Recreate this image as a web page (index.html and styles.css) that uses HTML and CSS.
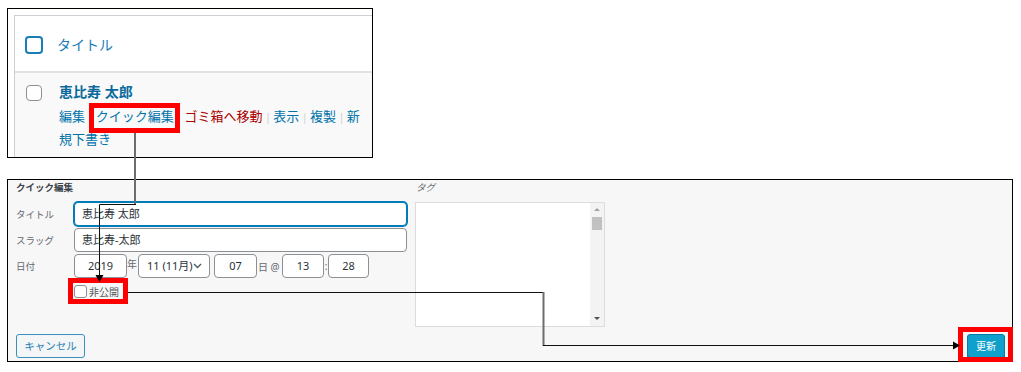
FILE: index.html
```html
<!DOCTYPE html>
<html lang="ja">

<head>
    <meta charset="UTF-8">
    <meta name="viewport" content="width=device-width, initial-scale=1.0">
    <title>クイック編集</title>
    <link rel="stylesheet" href="styles.css">
</head>

<body>
    <div class="page">
        <!-- 投稿一覧のスクリーンショット -->
        <div class="shot shot-list">
            <div class="list-table">
                <div class="list-head">
                    <span class="cb cb-head"></span>
                    <span class="col-title">タイトル</span>
                </div>
                <div class="list-row">
                    <span class="cb cb-row"></span>
                    <div class="row-body">
                        <div class="row-title">恵比寿 太郎</div>
                        <div class="row-actions"><a>編集</a> <span class="sep">|</span> <a>クイック編集</a> <span class="sep">|</span> <a class="trash">ゴミ箱へ移動</a> <span class="sep">|</span> <a>表示</a> <span class="sep">|</span> <a>複製</a> <span class="sep">|</span> <a>新規下書き</a></div>
                    </div>
                </div>
            </div>
        </div>

        <!-- クイック編集のスクリーンショット -->
        <div class="shot shot-edit">
            <div class="edit-fields">
                <div class="edit-col">
                    <div class="edit-legend">クイック編集</div>
                    <div class="field-row">
                        <span class="field-label">タイトル</span>
                        <span class="text-input is-focus">恵比寿 太郎</span>
                    </div>
                    <div class="field-row">
                        <span class="field-label">スラッグ</span>
                        <span class="text-input">恵比寿-太郎</span>
                    </div>
                    <div class="field-row">
                        <span class="field-label">日付</span>
                        <span class="text-input num num-year">2019</span>
                        <span class="unit unit-year">年</span>
                        <span class="text-input select"><span>11 (11月)</span>
                            <svg class="chevron" width="9" height="6" viewBox="0 0 9 6"><path d="M1 1l3.5 3.5L8 1" fill="none" stroke="#50575e" stroke-width="1.4"/></svg>
                        </span>
                        <span class="text-input num num-day">07</span>
                        <span class="unit unit-day">日&nbsp;@</span>
                        <span class="text-input num num-hour">13</span>
                        <span class="unit unit-colon">:</span>
                        <span class="text-input num num-min">28</span>
                    </div>
                    <div class="private">
                        <span class="cb cb-small"></span>
                        <span class="private-text">非公開</span>
                    </div>
                </div>
                <div class="tags-col">
                    <div class="tags-title">タグ</div>
                    <div class="tag-box">
                        <div class="scrollbar">
                            <span class="sb-up"></span>
                            <span class="sb-thumb"></span>
                            <span class="sb-down"></span>
                        </div>
                    </div>
                </div>
            </div>
            <div class="edit-buttons">
                <button class="btn btn-cancel">キャンセル</button>
                <button class="btn btn-primary">更新</button>
            </div>
        </div>
    </div>

    <!-- 注釈（赤枠と矢印） -->
    <svg class="notes" width="1021" height="372" viewBox="0 0 1021 372">
        <g fill="none">
            <path d="M135 133V205" stroke="#6d6d6d" stroke-width="2"/>
            <path d="M136 204.5H99.5V276" stroke="#111" stroke-width="1"/>
            <path d="M128 292.5H543.5" stroke="#111" stroke-width="1"/>
            <path d="M543.5 292V346" stroke="#6d6d6d" stroke-width="2"/>
            <path d="M543 345.5H954" stroke="#111" stroke-width="1"/>
            <rect x="91.5" y="105.5" width="86" height="25" stroke="#f00" stroke-width="5"/>
            <rect x="70.5" y="280.5" width="55" height="21" stroke="#f00" stroke-width="5"/>
            <rect x="960.5" y="329.5" width="50" height="30" stroke="#f00" stroke-width="5"/>
        </g>
        <polygon points="95.5,275 103.5,275 99.5,282" fill="#000"/>
        <polygon points="953,341.5 953,349.5 960,345.5" fill="#000"/>
    </svg>
</body>

</html>
```

FILE: styles.css
```css
/* 全体 */
body {
    margin: 0;
    width: 1021px;
    height: 372px;
    background: #fff;
    position: relative;
    overflow: hidden;
    font-family: 'Noto Sans', 'Noto Sans CJK JP', sans-serif;
    color: #3c434a;
}

.page {
    display: flex;
    flex-direction: column;
    align-items: flex-start;
    gap: 21px;
    padding: 8px 0 0 7px;
}

.shot {
    box-sizing: border-box;
    border: 1px solid #000;
    overflow: hidden;
}

/* チェックボックス共通 */
.cb {
    display: inline-block;
    box-sizing: border-box;
    background: #fff;
    flex: none;
}

/* 投稿一覧 */
.shot-list {
    width: 366px;
    height: 150px;
    background: #fff;
    padding: 6px 0 0 6px;
}

.list-table {
    width: 380px;
    border: 1px solid #ccd0d4;
    border-bottom: 0;
    background: #fff;
}

.list-head {
    box-sizing: border-box;
    height: 57px;
    display: flex;
    align-items: flex-start;
    padding: 20px 0 0 10px;
    border-bottom: 2px solid #e1e2e4;
}

.cb-head {
    width: 18px;
    height: 18px;
    border: 2px solid #1a7db8;
    border-radius: 4px;
}

.col-title {
    margin-left: 14px;
    font-size: 14px;
    line-height: 18px;
    color: #1a7db8;
}

.list-row {
    display: flex;
    align-items: flex-start;
    height: 100px;
    padding: 9px 0 0 11px;
    background: #f9f9f9;
}

.cb-row {
    width: 16px;
    height: 16px;
    margin-top: 3px;
    border: 1px solid #8c8f94;
    border-radius: 4px;
}

.row-body {
    margin-left: 17px;
    width: 303px;
}

.row-title {
    font-size: 14px;
    font-weight: bold;
    line-height: 20px;
    color: #0a6a9c;
    margin-bottom: 3px;
}

/* 区切りの空白を細くするため、親は小さい文字サイズ */
.row-actions {
    font-size: 10px;
    line-height: 22px;
    color: #0073aa;
}

.row-actions a {
    font-size: 13px;
}

.row-actions .trash {
    color: #a00;
}

.row-actions .sep {
    color: #ccc;
}

/* クイック編集 */
.shot-edit {
    width: 1006px;
    height: 183px;
    background: #f7f7f7;
    display: flex;
    flex-direction: column;
    padding: 1px 7px 3px 8px;
}

.edit-fields {
    display: flex;
    gap: 8px;
}

.edit-col {
    width: 391px;
}

.edit-legend {
    font-size: 9.5px;
    font-weight: bold;
    line-height: 14px;
    color: #3c434a;
    margin-bottom: 7px;
}

.field-row {
    display: flex;
    align-items: center;
    height: 24px;
    margin-bottom: 2px;
}

.field-label {
    width: 58px;
    flex: none;
    font-size: 9.5px;
    color: #646970;
}

.text-input {
    box-sizing: border-box;
    width: 333px;
    height: 24px;
    padding: 0 7px;
    border: 1px solid #8c8f94;
    border-radius: 4px;
    background: #fff;
    font-size: 11px;
    line-height: 22px;
    color: #2c3338;
    white-space: nowrap;
}

.text-input.is-focus {
    border-color: #007cba;
    box-shadow: 0 0 0 1px #007cba;
}

.num {
    padding: 0;
    text-align: center;
}

.num-year { width: 53px; }
.num-day { width: 43px; margin-left: 4px; }
.num-hour { width: 42px; }
.num-min { width: 41px; }

.select {
    width: 72px;
    display: flex;
    align-items: center;
    justify-content: space-between;
    padding: 0 7px 0 8px;
}

.chevron {
    flex: none;
}

.unit {
    font-size: 10px;
    color: #646970;
    flex: none;
}

.unit-year {
    width: 11px;
    margin-bottom: 6px;
}

.unit-day {
    width: 25px;
    padding-left: 1px;
    box-sizing: border-box;
}

.unit-colon {
    width: 4px;
    text-align: center;
}

.private {
    display: flex;
    align-items: center;
    height: 14px;
    margin: 6px 0 0 58px;
}

.cb-small {
    width: 13px;
    height: 13px;
    border: 1px solid #8c8f94;
    border-radius: 3px;
}

.private-text {
    margin-left: 2px;
    font-size: 10px;
    color: #50575e;
}

/* タグ */
.tags-col {
    width: 190px;
}

.tags-title {
    padding-left: 1px;
    font-size: 9.5px;
    font-style: italic;
    line-height: 14px;
    color: #646970;
    margin-bottom: 7px;
}

.tag-box {
    box-sizing: border-box;
    height: 125px;
    border: 1px solid #dcdcde;
    background: #fff;
    display: flex;
    justify-content: flex-end;
}

.scrollbar {
    width: 14px;
    background: #f3f3f3;
    display: flex;
    flex-direction: column;
    align-items: center;
}

.sb-up {
    margin-top: 5px;
    border-left: 3px solid transparent;
    border-right: 3px solid transparent;
    border-bottom: 3px solid #a3a3a3;
}

.sb-thumb {
    width: 10px;
    height: 13px;
    margin-top: 6px;
    background: #c1c1c1;
}

.sb-down {
    margin-top: auto;
    margin-bottom: 6px;
    border-left: 3px solid transparent;
    border-right: 3px solid transparent;
    border-top: 3px solid #505050;
}

/* ボタン */
.edit-buttons {
    margin-top: auto;
    display: flex;
    justify-content: space-between;
    align-items: flex-end;
}

.btn {
    box-sizing: border-box;
    height: 24px;
    padding: 0;
    border-radius: 3px;
    font-family: inherit;
    font-size: 10.5px;
    line-height: 22px;
    cursor: pointer;
}

.btn-cancel {
    width: 69px;
    border: 1px solid #3a8fbf;
    background: #f3f5f6;
    color: #2a7fb0;
}

.btn-primary {
    width: 38px;
    font-size: 10px;
    border: 1px solid #0a7aa6;
    background: #10a0cc;
    color: #fff;
    box-shadow: 0 1px 0 #06779e;
}

/* 注釈 */
.notes {
    position: absolute;
    top: 0;
    left: 0;
    pointer-events: none;
}
```
